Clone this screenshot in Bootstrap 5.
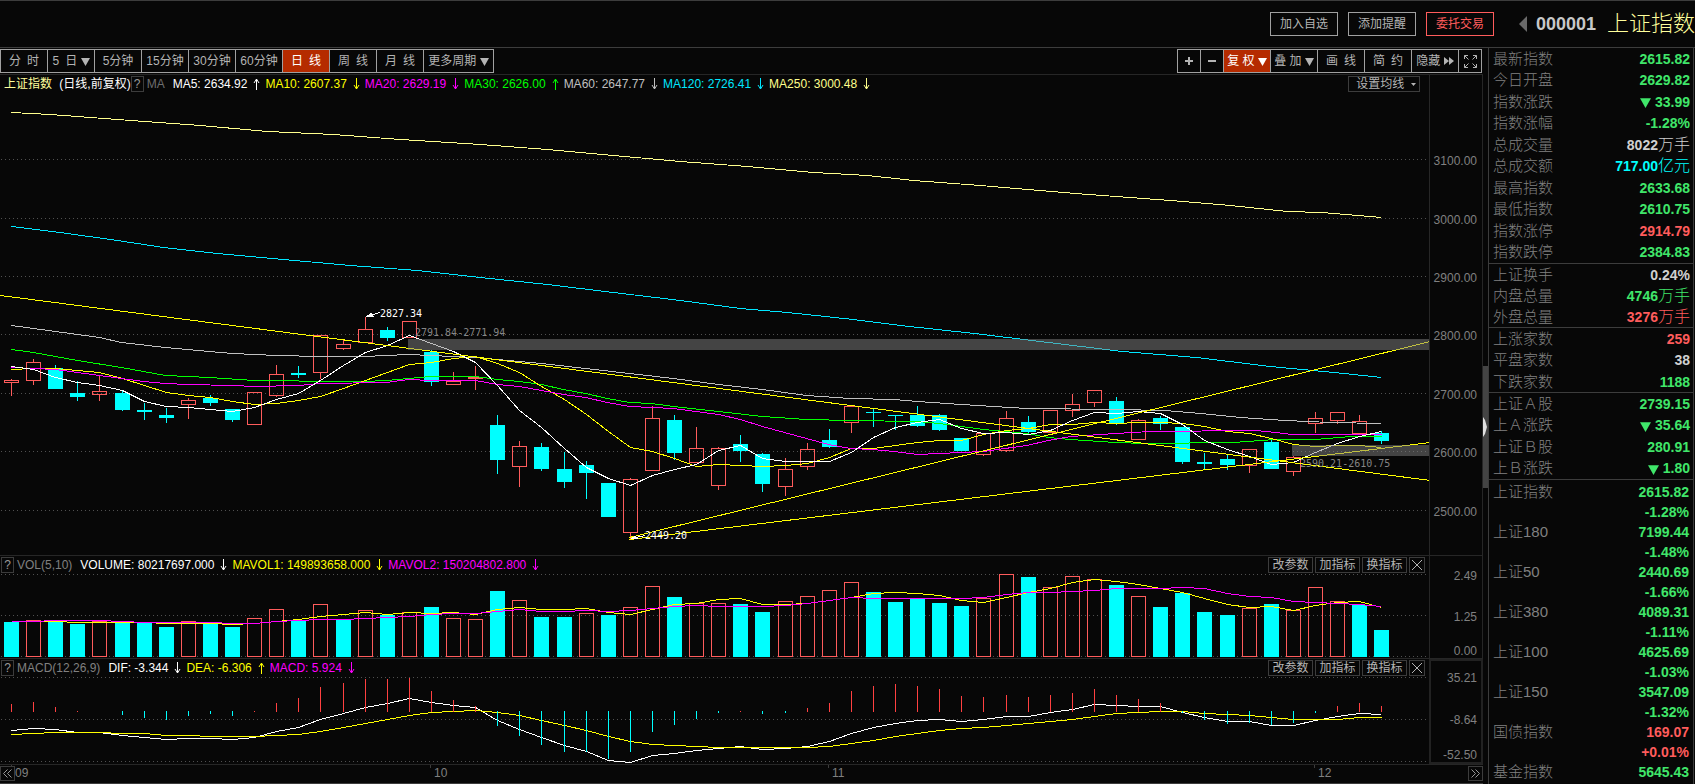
<!DOCTYPE html>
<html lang="zh-CN">
<head>
<meta charset="utf-8">
<meta name="viewport" content="width=device-width, initial-scale=1">
<title>上证指数 000001</title>
<link href="https://cdn.jsdelivr.net/npm/bootstrap@5.3.0/dist/css/bootstrap.min.css" rel="stylesheet">
<style>
:root{--bg:#070707;--edge:#3c3c3c;--grid:#262626;--btn:#a0a0a0;--dim:#808080;--up:#ff5c5c;--down:#40e66a}
body{background:var(--bg);color:#b4b4b4;font:12px/16px "Liberation Sans","Noto Sans CJK SC",sans-serif}
.head{height:48px;border-top:1px solid var(--edge);border-bottom:1px solid var(--edge)}
.head-actions{gap:10px;margin-right:25px}
.head-btn,.tool-btn,.mini-btn{--bs-btn-color:#b4b4b4;--bs-btn-border-color:var(--btn);--bs-btn-hover-color:#fff;font-size:12px;line-height:16px;padding:0;border-radius:0;white-space:nowrap}
.head-btn{width:68px;height:24px}
.head-btn.trade{--bs-btn-color:var(--up);--bs-btn-border-color:var(--up)}
.prev-btn{width:8px;height:16px;border:0;padding:0;background:none}
.code{font-size:18px;line-height:24px;font-weight:700;color:#c8c8c8;margin:0 11px 0 9px}
.title{font-size:22px;line-height:24px;font-weight:300;color:#ffff9c}
.tools{height:27px;padding:1px 2px 0 0;border-bottom:1px solid var(--grid)}
.tool-btn{width:48px;height:24px;margin-right:-1px;display:flex;align-items:center;justify-content:center}
.tool-btn.sq{width:24px}
.tool-btn.wide{width:71px}
.tool-btn.on{background:#b52b00;--bs-btn-color:#fff}
.tri{width:9px;height:9px;fill:currentColor}
.pane{display:grid;grid-template-columns:minmax(0,1fr) 54px;border-bottom:1px solid var(--grid)}
.pane-vol{height:103px}
.pane-macd{height:106px}
.plot{position:relative;min-width:0}
.plot svg.chart{position:absolute;inset:0;width:100%;height:100%}
.chart *{vector-effect:non-scaling-stroke;shape-rendering:crispEdges}
.axis{position:relative;border-left:1px solid var(--grid);border-right:1px solid var(--grid);color:var(--dim)}
.pane-macd .axis{border:2px solid #222}
.tick{position:absolute;right:5px;margin-top:-6px}
.pane-macd .tick{right:4px;margin-top:-8px}
.legend{position:relative;z-index:1;height:18px;padding:1px 0 1px 1px;display:flex;align-items:center;white-space:nowrap}
.legend-main{padding-left:4px}
.q-btn{width:13px;height:16px;line-height:12px;color:#999;background:var(--bg);border:1px solid var(--edge);padding:0;margin-right:3px}
.val{display:flex;align-items:center}
.arr{width:7px;height:12px;margin:0 5px 0 6px;fill:none;stroke:currentColor}
.mini-btn{--bs-btn-border-color:var(--edge);height:16px;width:45px;line-height:13px;margin-right:2px;background:var(--bg)}
.mini-btn.sq{width:16px;margin-right:4px;display:flex;align-items:center;justify-content:center}
.mini-btn.set{width:72px;margin-right:9px;padding-left:4px}
.note-tag{position:absolute;z-index:1;margin-top:-7px;font:10px/16px "DejaVu Sans Mono",monospace;color:#fff;white-space:nowrap}
.note-tag.gap-tag{color:#858585}
.time{height:19px;position:relative;color:var(--dim);border-bottom:1px solid var(--edge)}
.page-btn{position:absolute;z-index:1;top:1px;width:15px;height:15px;background:var(--bg);border:1px solid var(--edge);color:#999;padding:0;display:flex;align-items:center;justify-content:center}
.month{position:absolute;top:0;height:3px;border-left:1px solid var(--edge);padding-left:3px}
.split{width:5px;position:relative}
.grip{position:absolute;inset:318px 0 auto 0;height:122px;border:0;padding:0;background:#444}
.side{width:206px;border-left:1px solid var(--edge);border-right:1px solid var(--edge);margin-right:1px}
.quotes{width:100%;font-size:15px;line-height:20px;border-collapse:separate;border-spacing:0}
.quotes th{font-weight:300;color:var(--dim);padding:0 0 0 4px}
.quotes td{text-align:right;font-size:14px;font-weight:700;padding:0 3px 0 0;color:var(--down)}
.quotes th,.quotes td{height:21px}
.quotes tr:nth-child(even)>*{height:22px}
.quotes tbody:nth-of-type(2) tr:nth-child(even)>*{height:21px}
.quotes tbody+tbody tr:first-child>*{border-top:1px solid var(--edge);height:22px}
.quotes td.r{color:var(--up)}
.quotes td.w{color:#d0d0d0}
.quotes td.c{color:#0ff}
.quotes i{font-style:normal;font-weight:300;font-size:16px}
.quotes .tri{width:11px;height:11px;margin-right:4px}
.index-list{border-top:1px solid var(--edge);padding-top:2px}
.index-list th,.index-list td,.index-list tr:nth-child(even)>*{height:20px}
.index-list td{padding-right:4px}
</style>
</head>
<body class="d-flex flex-column vh-100 overflow-hidden">
<svg class="d-none"><defs>
<symbol id="down-tri" viewBox="0 0 9 9"><path d="M0 1h9L4.500 9z"/></symbol>
<symbol id="arr-up" viewBox="0 0 7 12"><path d="M3.500 12V1M1 5l2.500-4L6 5"/></symbol>
<symbol id="arr-down" viewBox="0 0 7 12"><path d="M3.500 0v11M1 7l2.500 4L6 7"/></symbol>
<symbol id="cross" viewBox="0 0 10 10"><path d="M0 0l10 10M10 0L0 10" stroke="currentColor" fill="none"/></symbol>
</defs></svg>

<header class="head d-flex align-items-center justify-content-end flex-shrink-0">
  <div class="head-actions d-flex">
    <button type="button" class="btn head-btn">加入自选</button>
    <button type="button" class="btn head-btn">添加提醒</button>
    <button type="button" class="btn head-btn trade">委托交易</button>
  </div>
  <button type="button" class="prev-btn d-flex" aria-label="上一只"><svg width="8" height="16" fill="#6a6a6a"><path d="M8 0v16L0 8z"/></svg></button>
  <span class="code">000001</span>
  <h1 class="title mb-0">上证指数</h1>
</header>

<div class="d-flex flex-fill" style="min-height:0">
<main class="d-flex flex-column flex-fill" style="min-width:0">
  <nav class="tools d-flex justify-content-between flex-shrink-0">
    <div class="d-flex">
      <button type="button" class="btn tool-btn">分&ensp;时</button>
      <button type="button" class="btn tool-btn">5&ensp;日&nbsp;<svg class="tri"><use href="#down-tri"/></svg></button>
      <button type="button" class="btn tool-btn">5分钟</button>
      <button type="button" class="btn tool-btn">15分钟</button>
      <button type="button" class="btn tool-btn">30分钟</button>
      <button type="button" class="btn tool-btn">60分钟</button>
      <button type="button" class="btn tool-btn on">日&ensp;线</button>
      <button type="button" class="btn tool-btn">周&ensp;线</button>
      <button type="button" class="btn tool-btn">月&ensp;线</button>
      <button type="button" class="btn tool-btn wide">更多周期&nbsp;<svg class="tri"><use href="#down-tri"/></svg></button>
    </div>
    <div class="d-flex">
      <button type="button" class="btn tool-btn sq" aria-label="放大"><svg width="8" height="8" fill="currentColor"><path d="M3 0h2v3h3v2H5v3H3V5H0V3h3z"/></svg></button>
      <button type="button" class="btn tool-btn sq" aria-label="缩小"><svg width="8" height="8" fill="currentColor"><path d="M0 3h8v2H0z"/></svg></button>
      <button type="button" class="btn tool-btn on">复&nbsp;权&nbsp;<svg class="tri"><use href="#down-tri"/></svg></button>
      <button type="button" class="btn tool-btn">叠&nbsp;加&nbsp;<svg class="tri"><use href="#down-tri"/></svg></button>
      <button type="button" class="btn tool-btn">画&ensp;线</button>
      <button type="button" class="btn tool-btn">简&ensp;约</button>
      <button type="button" class="btn tool-btn">隐藏&nbsp;<svg width="10" height="8" fill="currentColor"><path d="M0 0l5 4-5 4zM5 0l5 4-5 4z"/></svg></button>
      <button type="button" class="btn tool-btn sq" aria-label="全屏"><svg width="13" height="13" fill="none" stroke="currentColor"><path d="M.5 4V.5H4M.5.5l4 4M9 .5h3.500V4M12.500.5l-4 4M.5 9v3.500H4M.5 12.500l4-4M12.500 9v3.500H9M12.500 12.500l-4-4"/></svg></button>
    </div>
  </nav>

  <section class="pane flex-fill">
    <div class="plot">
      <div class="legend legend-main">
        <span style="color:#ffff9c">上证指数</span><span class="text-white ms-1">&nbsp;(日线,前复权)</span>
        <button type="button" class="q-btn">?</button><span class="me-2" style="color:#6e6e6e">MA</span>
        <span class="val text-white">MA5: 2634.92<svg class="arr"><use href="#arr-up"/></svg></span>
        <span class="val" style="color:#ff0">MA10: 2607.37<svg class="arr"><use href="#arr-down"/></svg></span>
        <span class="val" style="color:#f0f">MA20: 2629.19<svg class="arr"><use href="#arr-down"/></svg></span>
        <span class="val" style="color:#0f0">MA30: 2626.00<svg class="arr"><use href="#arr-up"/></svg></span>
        <span class="val" style="color:#c0c0c0">MA60: 2647.77<svg class="arr"><use href="#arr-down"/></svg></span>
        <span class="val" style="color:#00e6ff">MA120: 2726.41<svg class="arr"><use href="#arr-down"/></svg></span>
        <span class="val" style="color:#ffff8c">MA250: 3000.48<svg class="arr"><use href="#arr-down"/></svg></span>
        <button type="button" class="btn mini-btn set ms-auto">设置均线 &nbsp;<svg width="5" height="3" class="align-middle" fill="currentColor"><path d="M0 0h5L2.500 3z"/></svg></button>
      </div>
      <svg class="chart" id="price" viewBox="0 75 1429 480" preserveAspectRatio="none"></svg>
      <div id="notes"></div>
    </div>
    <div class="axis" id="priceAxis"></div>
  </section>

  <section class="pane pane-vol flex-shrink-0">
    <div class="plot">
      <div class="legend">
        <button type="button" class="q-btn">?</button><span class="me-2" style="color:var(--dim)">VOL(5,10)</span>
        <span class="val text-white">VOLUME: 80217697.000<svg class="arr"><use href="#arr-down"/></svg></span>
        <span class="val" style="color:#ff0">MAVOL1: 149893658.000<svg class="arr"><use href="#arr-down"/></svg></span>
        <span class="val" style="color:#f0f">MAVOL2: 150204802.800<svg class="arr"><use href="#arr-down"/></svg></span>
        <button type="button" class="btn mini-btn ms-auto">改参数</button>
        <button type="button" class="btn mini-btn">加指标</button>
        <button type="button" class="btn mini-btn">换指标</button>
        <button type="button" class="btn mini-btn sq" aria-label="关闭"><svg width="10" height="10"><use href="#cross"/></svg></button>
      </div>
      <svg class="chart" id="volume" viewBox="0 556 1429 102" preserveAspectRatio="none"></svg>
    </div>
    <div class="axis" id="volumeAxis"></div>
  </section>

  <section class="pane pane-macd flex-shrink-0">
    <div class="plot">
      <div class="legend">
        <button type="button" class="q-btn">?</button><span class="me-2" style="color:var(--dim)">MACD(12,26,9)</span>
        <span class="val text-white">DIF: -3.344<svg class="arr"><use href="#arr-down"/></svg></span>
        <span class="val" style="color:#ff0">DEA: -6.306<svg class="arr"><use href="#arr-up"/></svg></span>
        <span class="val" style="color:#f0f">MACD: 5.924<svg class="arr"><use href="#arr-down"/></svg></span>
        <button type="button" class="btn mini-btn ms-auto">改参数</button>
        <button type="button" class="btn mini-btn">加指标</button>
        <button type="button" class="btn mini-btn">换指标</button>
        <button type="button" class="btn mini-btn sq" aria-label="关闭"><svg width="10" height="10"><use href="#cross"/></svg></button>
      </div>
      <svg class="chart" id="macd" viewBox="0 659 1429 105" preserveAspectRatio="none"></svg>
    </div>
    <div class="axis" id="macdAxis"></div>
  </section>

  <footer class="time flex-shrink-0">
    <button type="button" class="page-btn start-0" aria-label="向前"><svg width="9" height="9" fill="none" stroke="currentColor"><path d="M4.500.5l-4 4 4 4M8.500.5l-4 4 4 4"/></svg></button>
    <div id="months"></div>
    <button type="button" class="page-btn end-0" aria-label="向后"><svg width="9" height="9" fill="none" stroke="currentColor"><path d="M.5.5l4 4-4 4M4.500.5l4 4-4 4"/></svg></button>
  </footer>
</main>

<div class="split flex-shrink-0"><button type="button" class="grip" aria-label="收起"><svg width="5" height="20" class="d-block" fill="#e0e0e0"><path d="M0 0l2 3 2 7-2 7-2 3z"/></svg></button></div>

<aside class="side flex-shrink-0">
  <table class="quotes">
    <tbody>
      <tr><th>最新指数</th><td>2615.82</td></tr>
      <tr><th>今日开盘</th><td>2629.82</td></tr>
      <tr><th>指数涨跌</th><td><svg class="tri"><use href="#down-tri"/></svg>33.99</td></tr>
      <tr><th>指数涨幅</th><td>-1.28%</td></tr>
      <tr><th>总成交量</th><td class="w">8022<i>万手</i></td></tr>
      <tr><th>总成交额</th><td class="c">717.00<i>亿元</i></td></tr>
      <tr><th>最高指数</th><td>2633.68</td></tr>
      <tr><th>最低指数</th><td>2610.75</td></tr>
      <tr><th>指数涨停</th><td class="r">2914.79</td></tr>
      <tr><th>指数跌停</th><td>2384.83</td></tr>
    </tbody>
    <tbody>
      <tr><th>上证换手</th><td class="w">0.24%</td></tr>
      <tr><th>内盘总量</th><td>4746<i>万手</i></td></tr>
      <tr><th>外盘总量</th><td class="r">3276<i>万手</i></td></tr>
    </tbody>
    <tbody>
      <tr><th>上涨家数</th><td class="r">259</td></tr>
      <tr><th>平盘家数</th><td class="w">38</td></tr>
      <tr><th>下跌家数</th><td>1188</td></tr>
    </tbody>
    <tbody>
      <tr><th>上证Ａ股</th><td>2739.15</td></tr>
      <tr><th>上Ａ涨跌</th><td><svg class="tri"><use href="#down-tri"/></svg>35.64</td></tr>
      <tr><th>上证Ｂ股</th><td>280.91</td></tr>
      <tr><th>上Ｂ涨跌</th><td><svg class="tri"><use href="#down-tri"/></svg>1.80</td></tr>
    </tbody>
  </table>
  <table class="quotes index-list">
    <tr><th>上证指数</th><td>2615.82</td></tr><tr><th></th><td>-1.28%</td></tr>
    <tr><th>上证180</th><td>7199.44</td></tr><tr><th></th><td>-1.48%</td></tr>
    <tr><th>上证50</th><td>2440.69</td></tr><tr><th></th><td>-1.66%</td></tr>
    <tr><th>上证380</th><td>4089.31</td></tr><tr><th></th><td>-1.11%</td></tr>
    <tr><th>上证100</th><td>4625.69</td></tr><tr><th></th><td>-1.03%</td></tr>
    <tr><th>上证150</th><td>3547.09</td></tr><tr><th></th><td>-1.32%</td></tr>
    <tr><th>国债指数</th><td class="r">169.07</td></tr><tr><th></th><td class="r">+0.01%</td></tr>
    <tr><th>基金指数</th><td>5645.43</td></tr>
  </table>
</aside>
</div>

<script src="https://cdn.jsdelivr.net/npm/bootstrap@5.3.0/dist/js/bootstrap.bundle.min.js"></script>
<script>
const W = 1429, UP = '#ff5c5c', DOWN = '#0ff';
const xAt = i => 11 + Math.round(i * 22.1);
const el = id => document.getElementById(id);
const poly = (pts, c) => `<polyline fill="none" stroke="${c}" points="${pts.map(p => (p[0] + .5) + ',' + (p[1] + .5)).join(' ')}"/>`;
const series = ys => ys.map((y, i) => [xAt(i), y]);
const pairs = s => s.split(' ').map(p => p.split(',').map(Number));
const dots = ys => ys.map(y => `<path d="M1 ${y + .5}H${W}" stroke="#505050" stroke-dasharray="1 3"/>`).join('');
const bar = (i, top, bottom, up) => up
  ? `<rect x="${xAt(i) - 6.5}" y="${top + .5}" width="14" height="${Math.max(bottom - top, 1)}" fill="none" stroke="${UP}"/>`
  : `<rect x="${xAt(i) - 7}" y="${top}" width="15" height="${Math.max(bottom - top, 1)}" fill="${DOWN}"/>`;

// Daily candles: direction, high, body top, body bottom, low
const candles = `u379,380,382,396 u359,362,380,385 d365,368,389,389 d381,393,397,401 u376,391,394,401 d390,393,410,411 d403,410,412,420 d408,415,418,423 u398,400,404,419 d395,398,403,406 d409,409,420,422 u392,392,424,424 u365,374,395,397 d366,373,375,378 u335,335,372,379 u340,344,348,350 u317,329,342,342 d327,330,338,341 u321,321,337,337 d350,352,382,386 u372,381,384,384 u366,377,378,390 d415,425,460,474 u441,446,466,487 d443,447,469,471 d452,469,482,488 d461,465,473,499 d483,483,517,517 u478,479,532,539 u406,418,470,470 d415,420,453,460 u427,448,462,462 u447,448,485,490 d435,444,451,462 d453,454,484,492 u458,469,486,496 u443,449,466,470 d429,440,447,448 u406,406,422,433 d409,412,413,427 d415,415,416,430 d406,415,426,427 d414,415,430,431 d438,438,451,451 u433,433,454,456 u411,418,450,452 d416,422,432,434 u410,410,432,432 u394,404,410,417 u390,390,402,407 d397,401,423,425 u419,420,439,439 d416,418,424,430 d427,427,462,464 d453,462,464,469 d455,459,465,470 u449,449,465,473 d440,442,469,469 u456,457,471,476 u412,418,423,433 u412,412,420,424 u415,421,433,433 d431,433,441,444`
  .split(' ').map(s => [s[0] === 'u', ...s.slice(1).split(',').map(Number)]);
const candleSvg = candles.map(([up, hi, t, b, lo], i) => {
  const x = xAt(i) + .5, c = up ? UP : DOWN;
  return `<path stroke="${c}" d="M${x} ${hi}V${t}M${x} ${b}V${lo}"/>` + bar(i, t, b, up);
}).join('');

const ma5 = [366,369,377,382,385,390,401,406,407,409,411,407,399,393,380,365,352,345,335,343,351,362,385,410,427,448,467,478,485,475,469,464,450,445,458,461,461,461,452,437,427,422,419,428,433,432,434,430,420,412,413,411,413,424,440,449,456,464,462,452,443,436,431];
const ma10 = [369,368,368,370,372,378,385,392,395,397,401,404,403,400,396,388,380,372,364,362,358,356,363,372,386,399,414,431,447,451,458,466,464,465,466,465,463,457,448,448,445,442,440,440,434,430,428,424,424,422,423,422,422,423,426,431,433,438,444,446,445,445,447];
const ma20 = pairs('11,367 33,368 55,369 77,372 99,375 121,378 143,381 165,383 187,384 232,385 254,386 298,385 320,383 386,382 408,379 430,380 475,380 497,384 519,386 541,390 563,394 585,397 607,402 629,406 673,408 718,414 740,419 762,426 784,432 806,438 828,444 850,448 872,449 894,451 917,454 961,452 983,451 1026,445 1048,440 1070,436 1115,433 1150,431 1255,430 1275,432 1292,434 1381,434');
const ma30 = pairs('11,349 33,352 77,360 121,367 143,371 165,375 187,376 209,377 254,380 276,380 320,381 364,381 386,380 408,378 430,376 475,376 497,379 519,381 541,384 563,389 585,393 607,398 629,402 651,403 673,406 718,411 762,416 806,419 850,420 917,421 939,423 961,426 983,429 1026,433 1048,437 1070,439 1115,442 1145,443 1233,442 1275,439 1315,439 1350,436 1381,436');
const ma60 = pairs('11,325 55,331 99,337 121,342 165,347 209,351 232,353 276,355 320,356 364,356 408,354 430,355 453,356 475,357 497,359 541,363 585,368 629,373 673,378 718,384 762,389 806,395 850,398 894,399 917,401 961,404 1026,408 1115,409 1165,410 1200,413 1240,417 1285,420 1330,422 1381,423');
const ma120 = pairs('11,226 60,232 117,240 163,247 217,253 283,259 350,265 417,270 480,277 547,284 613,292 680,300 740,308 787,312 853,319 900,325 974,333 1048,342 1122,351 1196,357 1270,366 1344,373 1381,377');
const ma250 = pairs('11,112 50,114 117,119 200,125 267,131 333,134 400,139 480,144 547,149 613,155 680,161 747,166 813,172 867,175 913,180 980,185 1075,193 1170,200 1230,205 1287,211 1321,212 1381,217');

const priceGrid = [[159,'3100.00'],[218,'3000.00'],[276,'2900.00'],[334,'2800.00'],[393,'2700.00'],[451,'2600.00'],[510,'2500.00']];
el('price').innerHTML = dots(priceGrid.map(g => g[0])) + candleSvg
  + poly(ma250, '#ffff8c') + poly(ma120, '#00e6ff') + poly(ma60, '#c0c0c0') + poly(ma30, '#0f0')
  + poly(series(ma10), '#ff0') + poly(ma20, '#f0f') + poly(series(ma5), '#fff')
  + poly([[0,295],[1430,480]], '#ff0') + poly([[629,537],[1430,341]], '#ff0') + poly([[629,539],[1430,442]], '#ff0')
  + '<path fill="#818181" fill-opacity=".5" d="M408 339H1429V350H408zM1292 445H1429V456H1292z"/>'
  + '<path stroke="#fff" fill="#fff" d="M380 312.500L367 316.500M367 316.500L371 313.500L373 316.500z"/>'
  + '<path stroke="#fff" fill="#fff" d="M645 535.500L631 538.500M631 538.500L635 536.500L637 538.500z"/>';

const notes = [[380,313,'2827.34',''],[415,332,'2791.84-2771.94','gap-tag'],[645,535,'2449.20',''],[1300,463,'2590.21-2610.75','gap-tag']];
el('notes').innerHTML = notes.map(([x, y, t, c]) => `<span class="note-tag ${c}" style="left:${x / W * 100}%;top:${(y - 75) / 4.8}%">${t}</span>`).join('');
const axis = (id, list, top, h) => el(id).innerHTML = list.map(([y, t]) => `<span class="tick" style="top:${(y - top) / h * 100}%">${t}</span>`).join('');
axis('priceAxis', priceGrid, 75, 480);

// Volume bars: negative marks a falling day
const vols = [-622,620,-621,-624,621,-623,-623,-627,621,-623,-627,618,609,-620,604,-619,610,-615,612,-607,618,619,-591,600,-617,-617,613,-615,607,586,-597,603,603,-604,-612,601,596,590,582,-592,-602,-599,-603,-606,598,574,-577,587,576,579,-585,596,-607,-593,-612,-615,608,-604,610,587,601,-605,-630];
const mv1 = [621,621,621,622,622,622,622,623,623,623,624,623,621,619,616,614,612,614,612,613,612,614,609,607,609,609,608,612,614,609,604,603,599,598,604,604,603,600,597,593,592,593,595,600,602,597,592,588,582,579,581,584,588,592,598,604,607,606,610,605,602,601,607];
const mv2 = [621,621,620,620,620,621,622,622,622,622,623,623,621,620,619,619,618,617,616,614,613,613,611,609,611,611,610,611,610,608,606,605,606,606,606,605,603,600,597,598,598,598,598,598,597,594,592,592,591,590,588,588,588,587,588,593,596,597,601,602,603,604,606];
el('volume').innerHTML = dots([574,615,656]) + vols.map((v, i) => v > 0 ? bar(i, v, 656, true) : bar(i, -v, 657, false)).join('')
  + poly(series(mv1), '#ff0') + poly(series(mv2), '#f0f');
axis('volumeAxis', [[574,'2.49'],[615,'1.25'],[649,'0.00']], 556, 102);

const hist = [704,702,707,711,0,715,718,720,716,714,716,711,703,698,687,683,679,679,678,691,700,706,726,736,745,752,752,759,752,732,725,719,713,711,714,713,708,703,691,686,684,686,689,696,697,695,697,695,693,689,695,699,703,713,720,724,723,725,723,713,706,703,706];
const dif = [730,728,729,732,732,735,737,739,738,738,739,737,731,727,719,713,707,703,698,702,705,707,720,729,737,745,751,760,762,755,753,750,748,746,749,748,746,741,733,727,723,720,719,721,719,716,716,712,709,704,705,706,706,712,717,721,721,725,725,720,716,713,714];
const dea = [734,733,732,732,732,733,733,735,735,736,736,736,735,734,731,727,723,719,715,712,711,710,712,715,720,725,730,736,741,744,745,746,747,747,747,747,747,746,743,740,736,733,730,728,727,725,723,721,719,716,713,712,711,711,713,714,715,717,719,719,719,717,717];
el('macd').innerHTML = dots([677,719,761])
  + poly(series(dif), '#fff') + poly(series(dea), '#ff0')
  + hist.map((v, i) => v ? `<path stroke="${v < 712 ? '#ff4040' : DOWN}" d="M${xAt(i) + .5} ${v}V${v < 712 ? 712 : 711}"/>` : '').join('');
axis('macdAxis', [[678,'35.21'],[720,'-8.64'],[755,'-52.50']], 661, 101);

el('months').innerHTML = [[11,'09'],[430,'10'],[828,'11'],[1314,'12']].map(([x, t]) => `<span class="month" style="left:${x / 1483 * 100}%">${t}</span>`).join('');
</script>
</body>
</html>
